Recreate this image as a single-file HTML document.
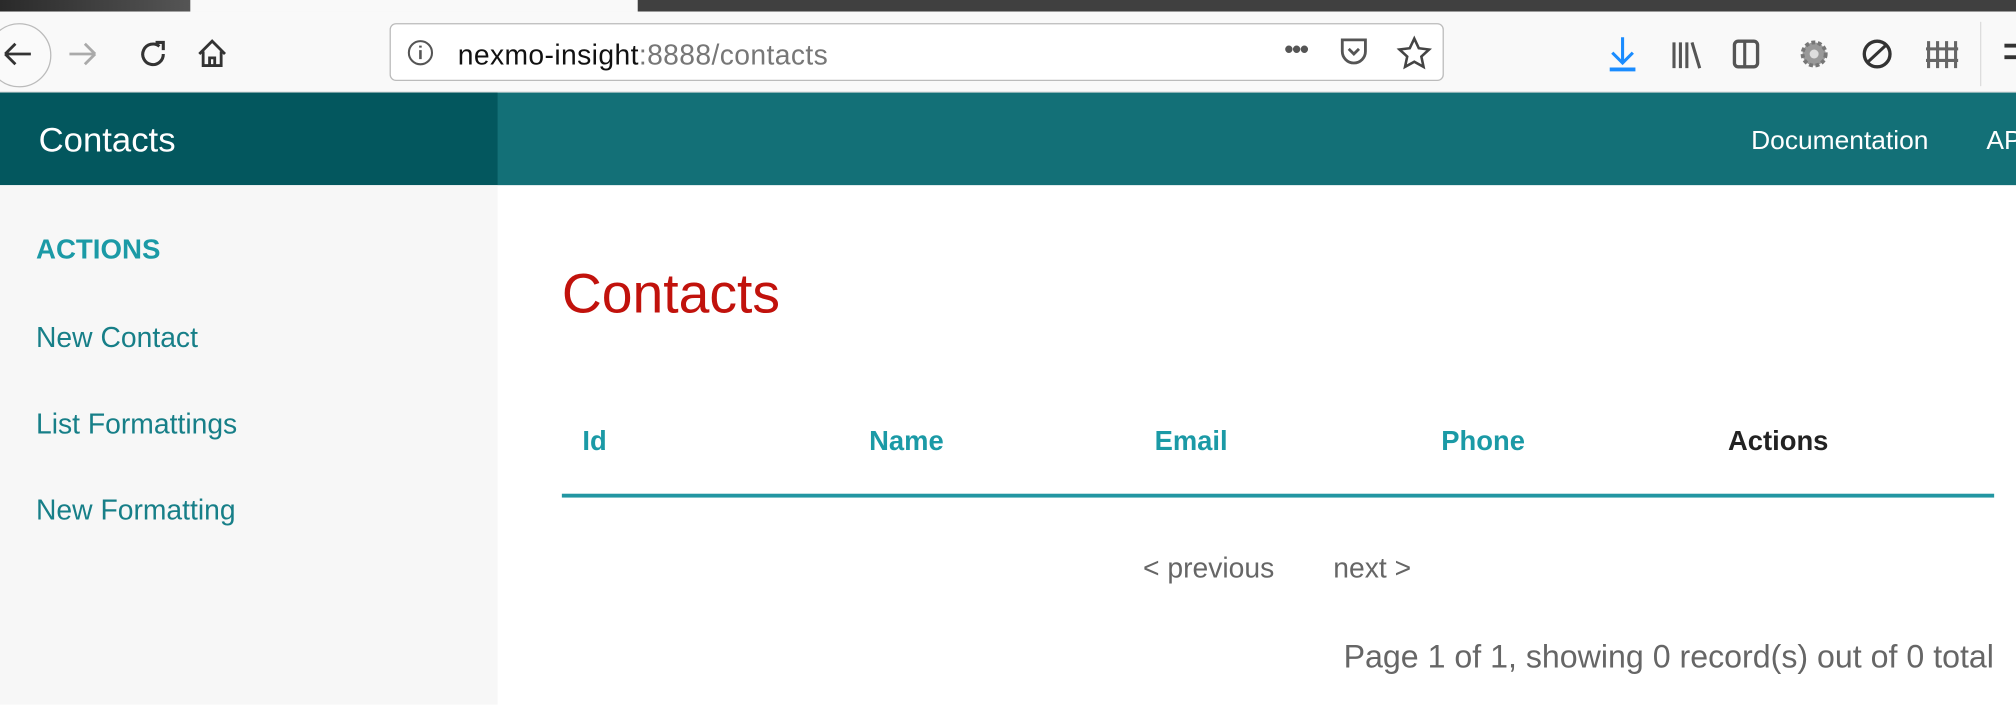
<!DOCTYPE html>
<html><head><meta charset="utf-8"><style>
html,body{margin:0;padding:0;width:2016px;height:704px;overflow:hidden;background:#fff}
#w{position:absolute;left:0;top:0;width:1568px;height:548px;transform:scale(1.285714);transform-origin:0 0;font-family:"Liberation Sans",Arial,sans-serif}
.a{position:absolute;white-space:nowrap}
</style></head><body><div id="w">
<div class="a" style="left:0;top:0;width:1568px;height:9px;background:#404040"></div>
<div class="a" style="left:0;top:0;width:148px;height:9px;background:linear-gradient(90deg,#2a2a2a,#555)"></div>
<div class="a" style="left:148px;top:0;width:348px;height:9px;background:#f9f9f9"></div>
<div class="a" style="left:0;top:9px;width:1568px;height:63px;background:#f9f9f9;border-bottom:1px solid #e0e0e0;box-sizing:border-box"></div>
<div class="a" style="left:-10px;top:18px;width:48px;height:48px;border:1px solid #bbb;border-radius:50%;background:#fafafa"></div>
<svg class="a" style="left:0;top:28px" width="190" height="28" viewBox="0 0 190 28">
<path d="M4 14h20M4 14l8-8M4 14l8 8" stroke="#333" stroke-width="2.2" fill="none"/>
<path d="M54 14h20M74 14l-8-8M74 14l-8 8" stroke="#aaa" stroke-width="2.2" fill="none"/>
<path d="M124 8a8 8 0 1 0 3 6" stroke="#333" stroke-width="2.4" fill="none"/><path d="M121 5h6v6" stroke="#333" stroke-width="2.4" fill="none"/>
<path d="M155 14l10-10 10 10M158 12v11h14V12M163 23v-6h4v6" stroke="#333" stroke-width="2.2" fill="none"/>
</svg>
<div class="a" style="left:303px;top:18px;width:820px;height:45px;border:1px solid #bbb;border-radius:5px;background:#fff;box-sizing:border-box"></div>
<svg class="a" style="left:316px;top:30px" width="22" height="22"><circle cx="11" cy="11" r="9" stroke="#555" stroke-width="1.6" fill="none"/><path d="M11 9v7M11 5.5v1.5" stroke="#555" stroke-width="2"/></svg>
<div class="a" style="left:356px;top:30px;font-size:22px;color:#111;letter-spacing:0.3px">nexmo-insight<span style="color:#777">:8888/contacts</span></div>
<div class="a" style="left:999px;top:28px;font-size:20px;color:#555;font-weight:bold;letter-spacing:-1px">•••</div>
<svg class="a" style="left:1040px;top:27px" width="80" height="28"><path d="M4 4h18v9a9 9 0 0 1-18 0z" stroke="#555" stroke-width="2.2" fill="none"/><path d="M9 11l4 4 4-4" stroke="#555" stroke-width="2.2" fill="none"/><path d="M60 3l3.5 7.5 8 1-6 5.5 1.7 8-7.2-4-7.2 4 1.7-8-6-5.5 8-1z" stroke="#444" stroke-width="2" fill="none"/></svg>
<svg class="a" style="left:1245px;top:26px" width="300" height="32">
<path d="M17 3v20M9 15l8 8 8-8" stroke="#1a8cff" stroke-width="2.4" fill="none"/><path d="M7 28h20" stroke="#1a8cff" stroke-width="3"/>
<path d="M57 7v20M62 7v20M67 7v20M71 7l6 20" stroke="#555" stroke-width="2.4"/>
<rect x="104" y="6" width="18" height="20" rx="3" stroke="#555" stroke-width="2.6" fill="none"/><path d="M112 6v20" stroke="#555" stroke-width="2.4"/>
<circle cx="166" cy="16" r="9" fill="#999" stroke="#777" stroke-width="3" stroke-dasharray="3 2"/><circle cx="166" cy="16" r="3.5" fill="#ddd"/>
<circle cx="215" cy="16" r="10" stroke="#333" stroke-width="2.6" fill="none"/><path d="M208 22l14-13" stroke="#333" stroke-width="2.4"/>
<path d="M255 6v21M262 6v21M269 6v21M276 6v21M253 12h25M253 21h25" stroke="#666" stroke-width="2.4"/>
</svg>
<div class="a" style="left:1540px;top:17px;width:1px;height:50px;background:#ddd"></div>
<div class="a" style="left:1559px;top:34px;width:9px;height:3px;background:#333"></div>
<div class="a" style="left:1559px;top:43px;width:9px;height:3px;background:#333"></div>
<div class="a" style="left:0;top:72px;width:1568px;height:72px;background:#137077"></div>
<div class="a" style="left:0;top:72px;width:387px;height:72px;background:#03575e"></div>
<div class="a" style="left:30px;top:94px;font-size:27px;color:#fff">Contacts</div>
<div class="a" style="left:1362px;top:98px;font-size:20.5px;color:#fff">Documentation</div>
<div class="a" style="left:1545px;top:98px;font-size:20.5px;color:#fff">AP</div>
<div class="a" style="left:0;top:144px;width:387px;height:404px;background:#f7f7f7"></div>
<div class="a" style="left:28px;top:182px;font-size:21.5px;font-weight:bold;color:#1b9aa6">ACTIONS</div>
<div class="a" style="left:28px;top:250px;font-size:22px;color:#177f88">New Contact</div>
<div class="a" style="left:28px;top:317px;font-size:22px;color:#177f88">List Formattings</div>
<div class="a" style="left:28px;top:384px;font-size:22px;color:#177f88">New Formatting</div>
<div class="a" style="left:437px;top:205px;font-size:43px;color:#c1120c">Contacts</div>
<div class="a" style="left:453px;top:331px;font-size:21.3px;font-weight:bold;color:#1b9aa6">Id</div>
<div class="a" style="left:676px;top:331px;font-size:21.3px;font-weight:bold;color:#1b9aa6">Name</div>
<div class="a" style="left:898px;top:331px;font-size:21.3px;font-weight:bold;color:#1b9aa6">Email</div>
<div class="a" style="left:1121px;top:331px;font-size:21.3px;font-weight:bold;color:#1b9aa6">Phone</div>
<div class="a" style="left:1344px;top:331px;font-size:21.3px;font-weight:bold;color:#222">Actions</div>
<div class="a" style="left:437px;top:384px;width:1114px;height:3px;background:#2296a2"></div>
<div class="a" style="left:889px;top:429px;font-size:22px;color:#666">&lt; previous</div>
<div class="a" style="left:1037px;top:429px;font-size:22px;color:#666">next &gt;</div>
<div class="a" style="left:1045px;top:497px;font-size:25px;color:#666">Page 1 of 1, showing 0 record(s) out of 0 total</div>
</div></body></html>
